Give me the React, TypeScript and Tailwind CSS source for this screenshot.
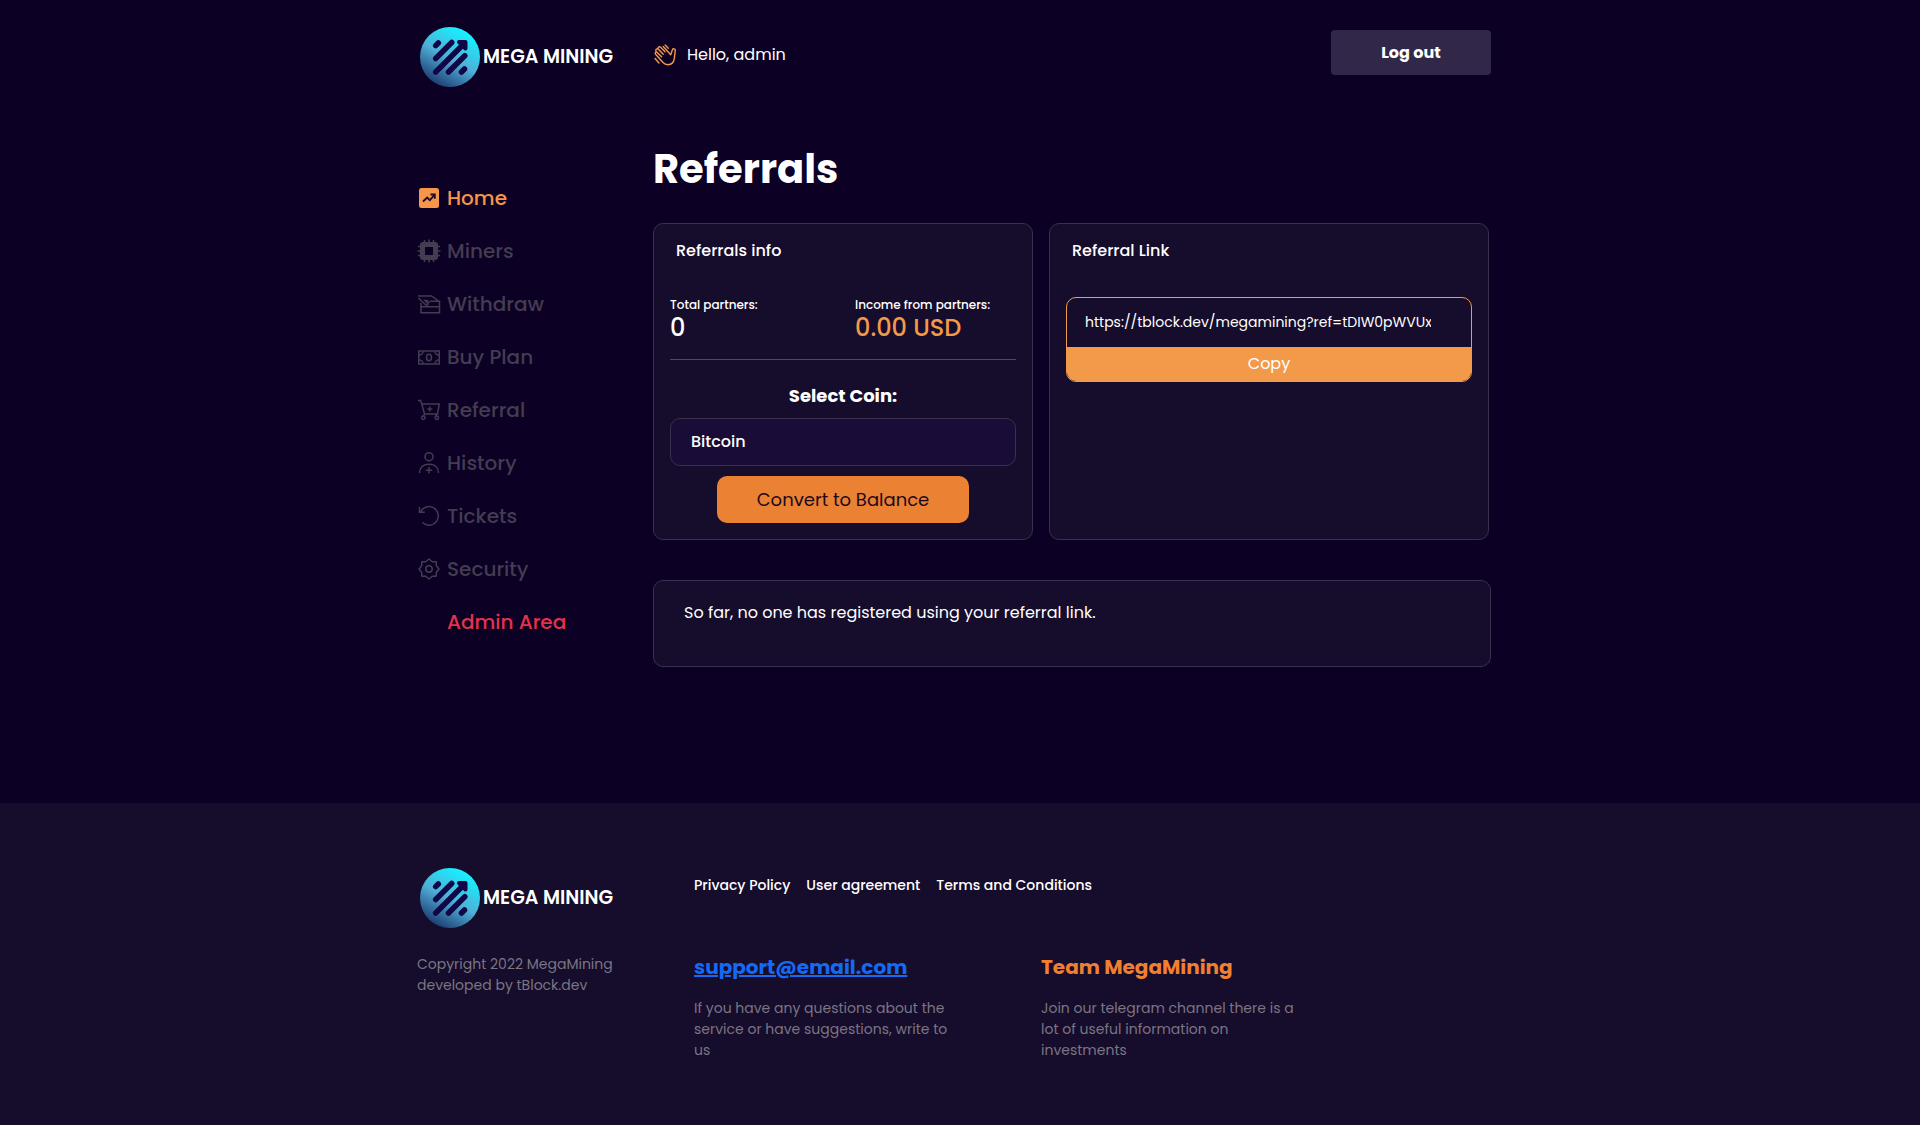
import { useRef, useState } from 'react';
import type { ReactNode } from 'react';

const REF_LINK = 'https://tblock.dev/megamining?ref=tDIW0pWVUx';

const NavIcon = ({ children }: { children: ReactNode }) => (
  <svg
    width="24"
    height="24"
    viewBox="0 0 24 24"
    fill="none"
    stroke="currentColor"
    strokeWidth="1.5"
    aria-hidden="true"
  >
    {children}
  </svg>
);

const navItems = [
  {
    label: 'Miners',
    icon: (
      <NavIcon>
        <path
          d="M6 3h12a3 3 0 0 1 3 3v12a3 3 0 0 1-3 3H6a3 3 0 0 1-3-3V6a3 3 0 0 1 3-3zM8 8v8h8V8z"
          fill="currentColor"
          fillRule="evenodd"
          stroke="none"
        />
        <path d="M7.5 1v3M12 .5V4M16.5 1v3M7.5 20v3M12 20v3.5M16.5 20v3M1 7.5h3M.5 12H4M1 16.5h3M20 7.5h3M20 12h3.5M20 16.5h3" />
      </NavIcon>
    ),
  },
  {
    label: 'Withdraw',
    icon: (
      <NavIcon>
        <path d="M1 4h13.5l7 5M13 9.3h9.5v11.4H4V11M4 14.8h18.5M1.5 6l7.3 7c1 .8 2.5 0 2-1.2L8 8.5l2.5.3 2 2.2" />
      </NavIcon>
    ),
  },
  {
    label: 'Buy Plan',
    icon: (
      <NavIcon>
        <rect x="1.75" y="6" width="20.5" height="13" />
        <ellipse cx="12" cy="12.5" rx="2.5" ry="3.2" />
        <path d="M6 6.5c0 2-1.8 3.5-4 3.5M18 6.5c0 2 1.8 3.5 4 3.5M6 18.5c0-2-1.8-3.5-4-3.5M18 18.5c0-2 1.8-3.5 4-3.5" />
      </NavIcon>
    ),
  },
  {
    label: 'Referral',
    icon: (
      <NavIcon>
        <path d="M1 2.5h2.5L4.8 6h17.5l-1.8 10h-13L4.8 6M7.5 16l-1 2M18.5 16l1.2 2M12.8 8.5v5M10.3 11h5" />
        <circle cx="6.3" cy="19.8" r="1.7" />
        <circle cx="19.8" cy="19.8" r="1.7" />
      </NavIcon>
    ),
  },
  {
    label: 'History',
    icon: (
      <NavIcon>
        <circle cx="12" cy="5.7" r="4" />
        <path d="M2.5 22c0-5 3.2-8.8 9.5-8.8s9.5 3.8 9.5 8.8M12 16v6.5M8.8 19.2h6.4" />
      </NavIcon>
    ),
  },
  {
    label: 'Tickets',
    icon: (
      <NavIcon>
        <path d="M2.5 3v5.3h5.3M3.5 8a9.3 9.3 0 1 1 1.9 10.5" />
      </NavIcon>
    ),
  },
  {
    label: 'Security',
    icon: (
      <NavIcon>
        <path
          strokeLinejoin="round"
          d="M12 2l3.2 2.7 4 .1.1 4L22 12l-2.7 3.2-.1 4-4 .1L12 22l-3.2-2.7-4-.1-.1-4L2 12l2.7-3.2.1-4 4-.1z"
        />
        <circle cx="12" cy="12" r="3.2" />
      </NavIcon>
    ),
  },
];

const Logo = ({ id }: { id: string }) => (
  <a href="#" className="flex items-center gap-[3px] pl-[3px] text-[19px] font-semibold whitespace-nowrap text-white">
    <svg width="60" height="60" viewBox="0 0 60 60" fill="none" aria-hidden="true">
      <defs>
        <linearGradient id={id} x1="46" y1="6" x2="16" y2="58" gradientUnits="userSpaceOnUse">
          <stop offset="0" stopColor="#16f0ff" />
          <stop offset="0.5" stopColor="#4fb0d8" />
          <stop offset="1" stopColor="#1d3b72" />
        </linearGradient>
      </defs>
      <circle cx="30" cy="30" r="30" fill={`url(#${id})`} />
      <g stroke="#110747" strokeWidth="5.5" strokeLinecap="round">
        <path d="M15.7 18.6l2.6-2.6M15.7 31.5l16-16M15.7 45l27-27M28.5 45l16.3-16.3M41.5 45l3-3" />
      </g>
      <path d="M39 15h6.5v6.5z" fill="#110747" stroke="#110747" strokeWidth="4" strokeLinejoin="round" />
    </svg>
    MEGA MINING
  </a>
);

const WaveIcon = () => (
  <svg
    width="24"
    height="24"
    viewBox="0 0 24 24"
    fill="none"
    stroke="#f39a4a"
    strokeWidth="1.4"
    strokeLinecap="round"
    strokeLinejoin="round"
    aria-hidden="true"
  >
    <path d="M12 8.8 7.6 4.2a1.5 1.5 0 0 0-2.2 2.1l4.8 5M5.4 6.3a1.5 1.5 0 0 0-2.2 2.1l5.400 5.400M3.600 8.800a1.500 1.500 0 0 0-1 2.500l7.400 8.200c1.300 1.400 2.900 2.200 4.800 2.200 3.600 0 6-2.400 6.500-6l1-8.200a1.500 1.500 0 0 0-2.900-.7l-1.700 5L10.200 3.500" />
    <path d="M12.200 2l3 3.300M2 15.500l4 4.500" />
  </svg>
);

const Header = () => (
  <header className="grid grid-cols-[236px_1fr] items-start pt-[27px]">
    <Logo id="logo-header" />
    <div className="flex items-start justify-between">
      <div className="flex h-14 items-center gap-2.5 text-base">
        <WaveIcon />
        Hello, admin
      </div>
      <div className="flex h-[51px] items-center">
        <button className="h-[45px] w-40 rounded bg-[#312748] text-base font-bold text-white">
          Log out
        </button>
      </div>
    </div>
  </header>
);

const Sidebar = () => (
  <nav className="flex flex-col pt-[84px] text-xl font-medium">
    <a href="#" className="flex h-[53px] items-center gap-1.5 text-[#f79548]">
      <svg width="24" height="24" viewBox="0 0 24 24" fill="none" aria-hidden="true">
        <rect x="2" y="2" width="20" height="20" rx="2.5" fill="currentColor" />
        <path d="M6 15.5l4.2-4 2.6 2.6L17.5 9M13.5 8.500h4.300v4.300" stroke="#1c0a2a" strokeWidth="1.8" />
      </svg>
      Home
    </a>
    {navItems.map((item) => (
      <a key={item.label} href="#" className="flex h-[53px] items-center gap-1.5 text-[#443c50]">
        {item.icon}
        {item.label}
      </a>
    ))}
    <a href="#" className="flex h-[53px] items-center pl-[30px] text-[#e3324b]">
      Admin Area
    </a>
  </nav>
);

const ReferralsInfo = () => (
  <section className="w-[380px] rounded-[10px] border border-[#3a304b] bg-[#160c2b] px-4 pb-4">
    <h2 className="px-1.5 pt-[15px] text-base leading-6 font-medium">Referrals info</h2>
    <div className="grid grid-cols-[185px_1fr] pt-[33px] font-medium">
      <div>
        <p className="text-xs leading-[18px]">Total partners:</p>
        <p className="text-2xl leading-7">0</p>
      </div>
      <div>
        <p className="text-xs leading-[18px]">Income from partners:</p>
        <p className="text-2xl leading-7 text-[#f39a4a]">0.00 USD</p>
      </div>
    </div>
    <form className="mt-[17px] flex flex-col items-center border-t border-[#51475f] pt-6">
      <label htmlFor="coin" className="text-lg leading-6 font-bold">
        Select Coin:
      </label>
      <select
        id="coin"
        className="mt-2.5 h-12 w-full appearance-none rounded-[10px] border border-[#3a304b] bg-[#190d37] px-5 text-base font-medium text-white"
      >
        <option>Bitcoin</option>
      </select>
      <button
        type="button"
        className="mt-2.5 h-[47px] w-[252px] rounded-[10px] bg-[#eb8132] text-lg text-[#1c0a1c]"
      >
        Convert to Balance
      </button>
    </form>
  </section>
);

const ReferralLink = () => {
  const inputRef = useRef<HTMLInputElement>(null);
  const [copied, setCopied] = useState(false);

  const handleCopy = () => {
    inputRef.current?.select();
    navigator.clipboard?.writeText(REF_LINK);
    setCopied(true);
  };

  return (
    <section className="mr-0.5 flex-1 rounded-[10px] border border-[#3a304b] bg-[#160c2b] px-4">
      <h2 className="px-1.5 pt-[15px] text-base leading-6 font-medium">
        <label htmlFor="ref-link">Referral Link</label>
      </h2>
      <div className="mt-[34px] overflow-hidden rounded-[10px] border border-[#f39a4a]">
        <input
          ref={inputRef}
          id="ref-link"
          readOnly
          value={REF_LINK}
          className="block h-[49px] w-full bg-transparent pr-10 pl-[18px] text-sm text-white outline-none"
        />
        <button onClick={handleCopy} className="block h-[34px] w-full bg-[#f39a4a] text-base text-white">
          {copied ? 'Copied' : 'Copy'}
        </button>
      </div>
    </section>
  );
};

const Footer = () => (
  <footer className="grow bg-[#160c2b] pt-[65px] pb-16">
    <div className="mx-auto grid max-w-[1086px] grid-cols-[277px_1fr] pr-3">
      <div>
        <Logo id="logo-footer" />
        <p className="pt-[26px] text-sm leading-[21px] text-[#7b7583]">
          Copyright 2022 MegaMining
          <br />
          developed by tBlock.dev
        </p>
      </div>
      <div>
        <div className="flex gap-4 pt-[7px] text-sm leading-[21px] font-medium">
          <a href="#">Privacy Policy</a>
          <a href="#">User agreement</a>
          <a href="#">Terms and Conditions</a>
        </div>
        <div className="grid grid-cols-[347px_1fr] pt-14">
          <div>
            <a href="mailto:support@email.com" className="text-xl leading-[30px] font-bold text-[#1469f5] underline">
              support@email.com
            </a>
            <p className="max-w-[262px] pt-4 text-sm leading-[21px] text-[#7b7583]">
              If you have any questions about the service or have suggestions, write to us
            </p>
          </div>
          <div>
            <a href="#" className="text-xl leading-[30px] font-bold text-[#f07f30]">
              Team MegaMining
            </a>
            <p className="max-w-[262px] pt-4 text-sm leading-[21px] text-[#7b7583]">
              Join our telegram channel there is a lot of useful information on investments
            </p>
          </div>
        </div>
      </div>
    </div>
  </footer>
);

export default function App() {
  return (
    <div className="flex min-h-screen flex-col bg-[#0c0025] font-['Poppins','Inter',sans-serif] text-white">
      <div className="mx-auto w-full max-w-[1086px] pr-3">
        <Header />
        <div className="grid grid-cols-[236px_1fr] pb-[136px]">
          <Sidebar />
          <main className="pt-[58px]">
            <h1 className="text-[40px] leading-[48px] font-bold">Referrals</h1>
            <div className="mt-[30px] flex gap-4">
              <ReferralsInfo />
              <ReferralLink />
            </div>
            <section className="mt-10 min-h-[87px] rounded-[10px] border border-[#3a304b] bg-[#160c2b] px-[30px] pt-5 text-base leading-6">
              So far, no one has registered using your referral link.
            </section>
          </main>
        </div>
      </div>
      <Footer />
    </div>
  );
}
